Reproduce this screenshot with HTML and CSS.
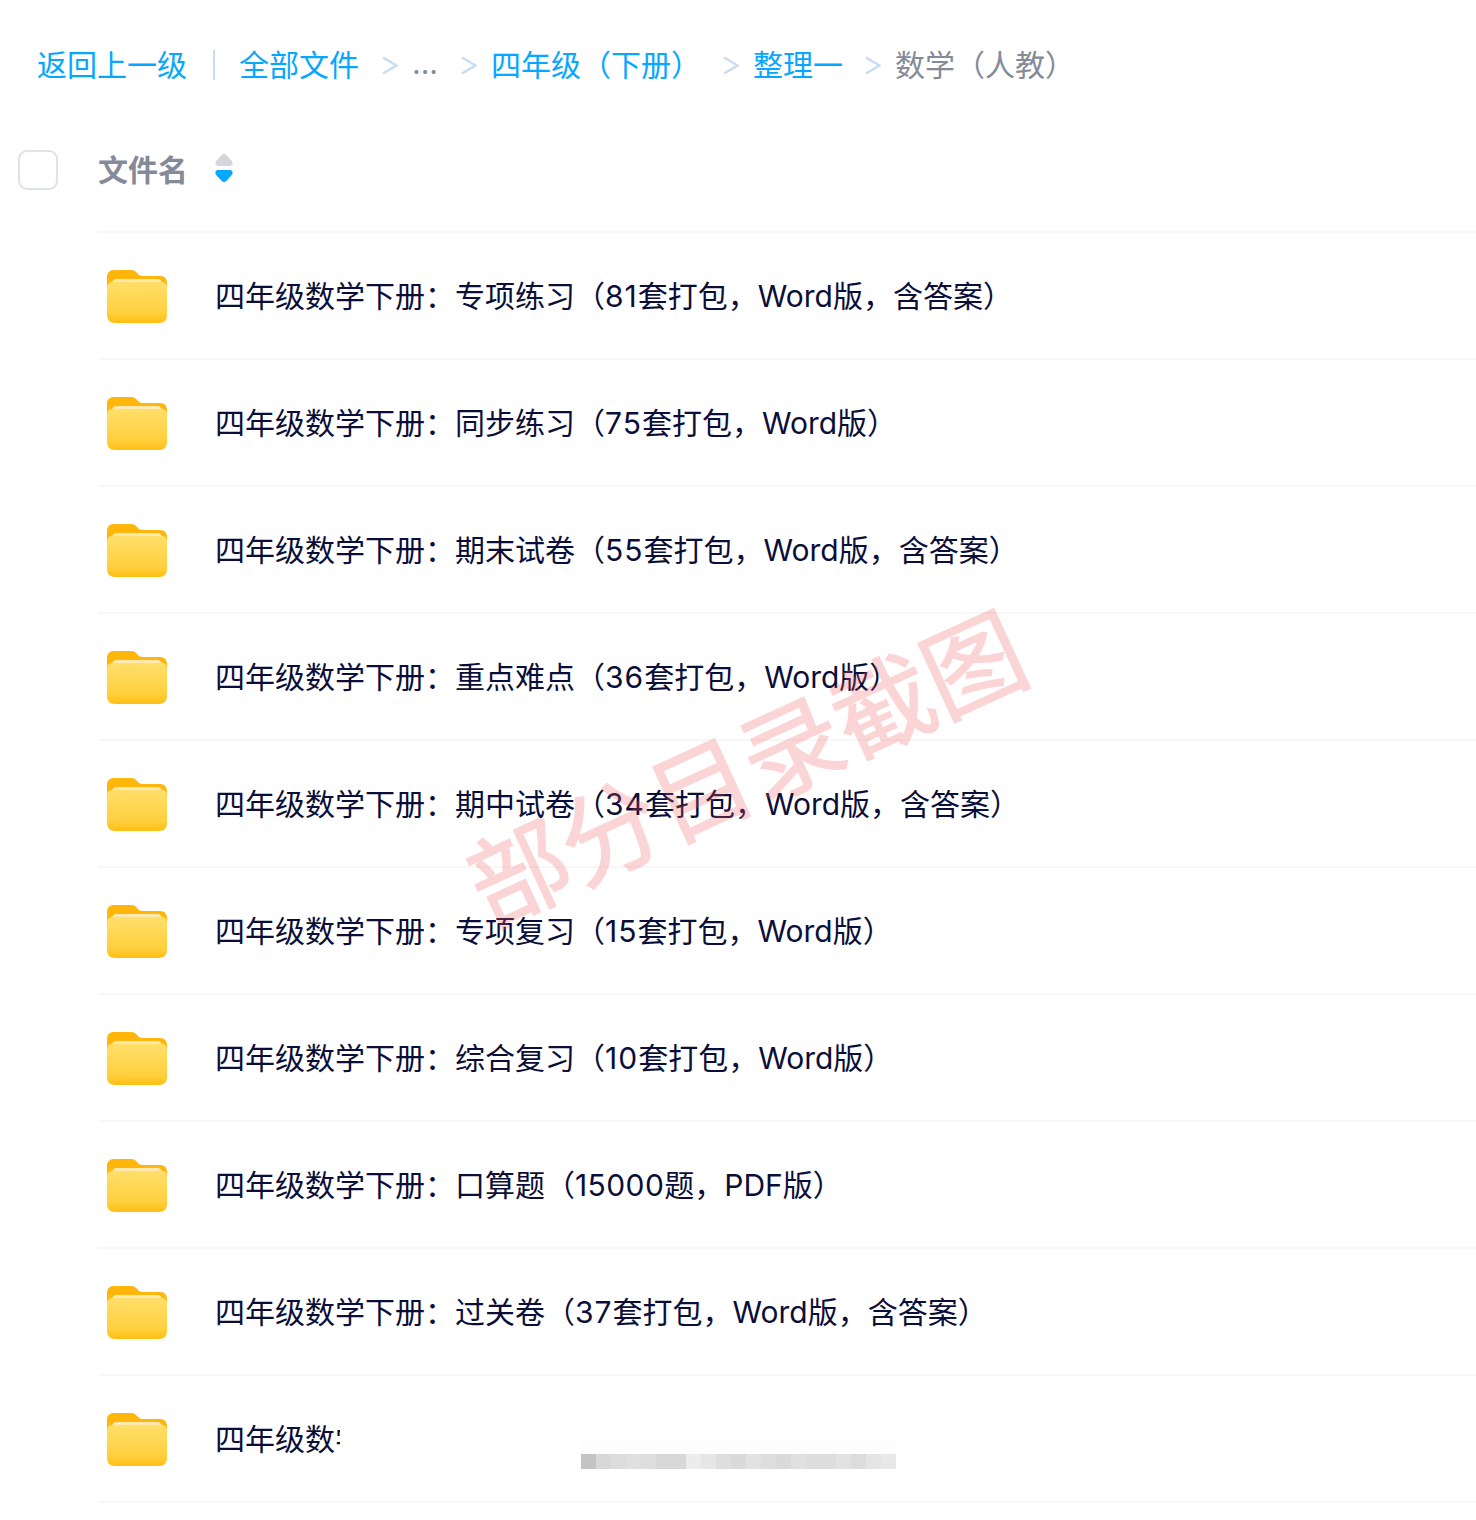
FILE: index.html
```html
<!DOCTYPE html>
<html lang="zh-CN">
<head>
    <meta charset="UTF-8">
    <title>全部文件</title>
    <link rel="stylesheet" href="styles.css">
</head>
<body>
    <svg class="defs" width="0" height="0">
        <defs>
            <linearGradient id="folderFront" x1="0" y1="0" x2="0" y2="1">
                <stop offset="0" stop-color="#ffdf6a"/>
                <stop offset="0.75" stop-color="#ffd03f"/>
                <stop offset="1" stop-color="#ffbe12"/>
            </linearGradient>
            <symbol id="folder" viewBox="0 0 60 53">
                <path d="M0 7C0 3 2.500 0 6.500 0H24C27 0 28.500 1 30.500 3.500C32 5.300 33.500 6 36 6H53C57.500 6 60 8.800 60 13V30H0Z" fill="#ffb60a"/>
                <path d="M5 14C5 10.500 7 9 10 9H50C53 9 55 10.500 55 14V20H5Z" fill="#ffe9ad"/>
                <path d="M0 18C0 13.500 2 12 6 12H54C58 12 60 13.500 60 18V45C60 50 57 53 52 53H8C3 53 0 50 0 45Z" fill="url(#folderFront)"/>
            </symbol>
            <symbol id="chevron" viewBox="0 0 16 19">
                <path d="M1 1.500L14.500 9.500L1 17.500" fill="none" stroke="#c9dcf6" stroke-width="2.600"/>
            </symbol>
        </defs>
    </svg>

    <div class="page">
        <nav class="crumbs">
            <a class="back">返回上一级</a>
            <span class="divider"></span>
            <a class="crumb-all">全部文件</a>
            <svg class="chevron"><use href="#chevron"/></svg>
            <span class="dots">...</span>
            <svg class="chevron"><use href="#chevron"/></svg>
            <a>四年级（下册）</a>
            <svg class="chevron"><use href="#chevron"/></svg>
            <a>整理一</a>
            <svg class="chevron"><use href="#chevron"/></svg>
            <span class="current">数学（人教）</span>
        </nav>

        <div class="list-head">
            <span class="checkbox"></span>
            <span class="head-name">文件名</span>
            <span class="sort">
                <svg width="18" height="12" viewBox="0 0 18 12"><path d="M9 0C10 0 10.800 .4 11.500 1.200L16.800 7C18.500 9 17.500 12 15 12H3C.5 12 -.5 9 1.200 7L6.500 1.200C7.200 .4 8 0 9 0Z" fill="#d3d6dd"/></svg>
                <svg width="18" height="12" viewBox="0 0 18 12"><path d="M9 12C10 12 10.800 11.600 11.500 10.800L16.800 5C18.500 3 17.500 0 15 0H3C.5 0 -.5 3 1.200 5L6.500 10.800C7.200 11.600 8 12 9 12Z" fill="#06a7ff"/></svg>
            </span>
        </div>

        <ul class="files">
            <li class="file"><svg class="folder"><use href="#folder"/></svg><span class="name">四年级数学下册：专项练习（<span class="num">81</span>套打包，Word版，含答案）</span></li>
            <li class="file"><svg class="folder"><use href="#folder"/></svg><span class="name">四年级数学下册：同步练习（<span class="num">75</span>套打包，Word版）</span></li>
            <li class="file"><svg class="folder"><use href="#folder"/></svg><span class="name">四年级数学下册：期末试卷（<span class="num">55</span>套打包，Word版，含答案）</span></li>
            <li class="file"><svg class="folder"><use href="#folder"/></svg><span class="name">四年级数学下册：重点难点（<span class="num">36</span>套打包，Word版）</span></li>
            <li class="file"><svg class="folder"><use href="#folder"/></svg><span class="name">四年级数学下册：期中试卷（<span class="num">34</span>套打包，Word版，含答案）</span></li>
            <li class="file"><svg class="folder"><use href="#folder"/></svg><span class="name">四年级数学下册：专项复习（<span class="num">15</span>套打包，Word版）</span></li>
            <li class="file"><svg class="folder"><use href="#folder"/></svg><span class="name">四年级数学下册：综合复习（<span class="num">10</span>套打包，Word版）</span></li>
            <li class="file"><svg class="folder"><use href="#folder"/></svg><span class="name">四年级数学下册：口算题（<span class="num-long">15000</span>题，PDF版）</span></li>
            <li class="file"><svg class="folder"><use href="#folder"/></svg><span class="name">四年级数学下册：过关卷（<span class="num">37</span>套打包，Word版，含答案）</span></li>
            <li class="file"><svg class="folder"><use href="#folder"/></svg><span class="name cut">四年级数学下册</span></li>
        </ul>

        <div class="watermark">部分目录截图</div>
        <div class="mosaic"></div>
    </div>
</body>
</html>
```

FILE: styles.css
```css
* {
    box-sizing: border-box;
}

body {
    margin: 0;
    background: #fff;
    font-family: Inter, "Noto Sans CJK SC", sans-serif;
    font-size: 30px;
    color: #0b0e38;
}

.defs {
    display: block;
}

.page {
    position: relative;
    height: 1520px;
    overflow: hidden;
}

/* breadcrumb */
.crumbs {
    display: flex;
    align-items: center;
    height: 130px;
    padding-left: 37px;
    color: #06a7ff;
    white-space: nowrap;
}

.crumbs a,
.crumbs .dots,
.crumbs .current {
    margin-bottom: 4px;
}

.divider {
    width: 2px;
    height: 30px;
    margin: 0 24px 0 26px;
    background: #c9dcf6;
}

.crumbs .crumb-all {
    margin-right: 1px;
}

.chevron {
    flex: none;
    width: 16px;
    height: 19px;
    margin: 0 14px 0 22px;
}

.dots {
    width: 27px;
    color: #858a99;
}

.current {
    color: #858a99;
}

/* table head */
.list-head {
    display: flex;
    align-items: center;
    height: 79px;
    padding-left: 18px;
}

.checkbox {
    width: 40px;
    height: 40px;
    border: 2px solid #dfe2ea;
    border-radius: 9px;
}

.head-name {
    margin-left: 40px;
    margin-bottom: 4px;
    color: #858a99;
    font-weight: 700;
}

.sort {
    display: flex;
    flex-direction: column;
    gap: 4px;
    margin-left: 27px;
    margin-bottom: 3px;
}

.sort svg {
    display: block;
}

/* rows */
.files {
    margin: 22px 0 0 98px;
    padding: 0;
    list-style: none;
    border-top: 2px solid #f7f7f8;
}

.file {
    display: flex;
    align-items: center;
    height: 127px;
    padding-left: 9px;
    border-bottom: 2px solid #f7f7f8;
    white-space: nowrap;
}

.folder {
    flex: none;
    width: 60px;
    height: 53px;
    margin-top: 2px;
    margin-right: 48px;
}

.name {
    margin-bottom: 4px;
}

.num {
    letter-spacing: 1px;
}

.num-long {
    letter-spacing: 0.4px;
}

.cut {
    width: 125px;
    overflow: hidden;
}

/* overlays */
.watermark {
    position: absolute;
    left: 447px;
    top: 708px;
    width: 600px;
    color: #f35c60;
    font-size: 100px;
    line-height: 124px;
    white-space: nowrap;
    -webkit-text-stroke: 1.5px #f35c60;
    opacity: 0.25;
    transform: rotate(-24.700deg);
    pointer-events: none;
}

.mosaic {
    position: absolute;
    left: 581px;
    top: 1454px;
    width: 315px;
    height: 15px;
    background: linear-gradient(90deg,
        #c4c4c4 0 15px, #d8d8d8 15px 30px, #dcdcdc 30px 45px, #e0e0e0 45px 60px,
        #dedede 60px 75px, #d8d8d8 75px 105px, #ececec 105px 120px, #e6e6e6 120px 135px,
        #dedede 135px 150px, #dadada 150px 165px, #e2e2e2 165px 180px, #dedede 180px 195px,
        #dadada 195px 210px, #e0e0e0 210px 225px, #dddddd 225px 255px, #e2e2e2 255px 270px,
        #dcdcdc 270px 285px, #e4e4e4 285px 300px, #e8e8e8 300px 315px);
}

.mosaic::before {
    content: "";
    position: absolute;
    left: 0;
    right: 0;
    top: -15px;
    height: 15px;
    background: #fdfdfd;
}
```
